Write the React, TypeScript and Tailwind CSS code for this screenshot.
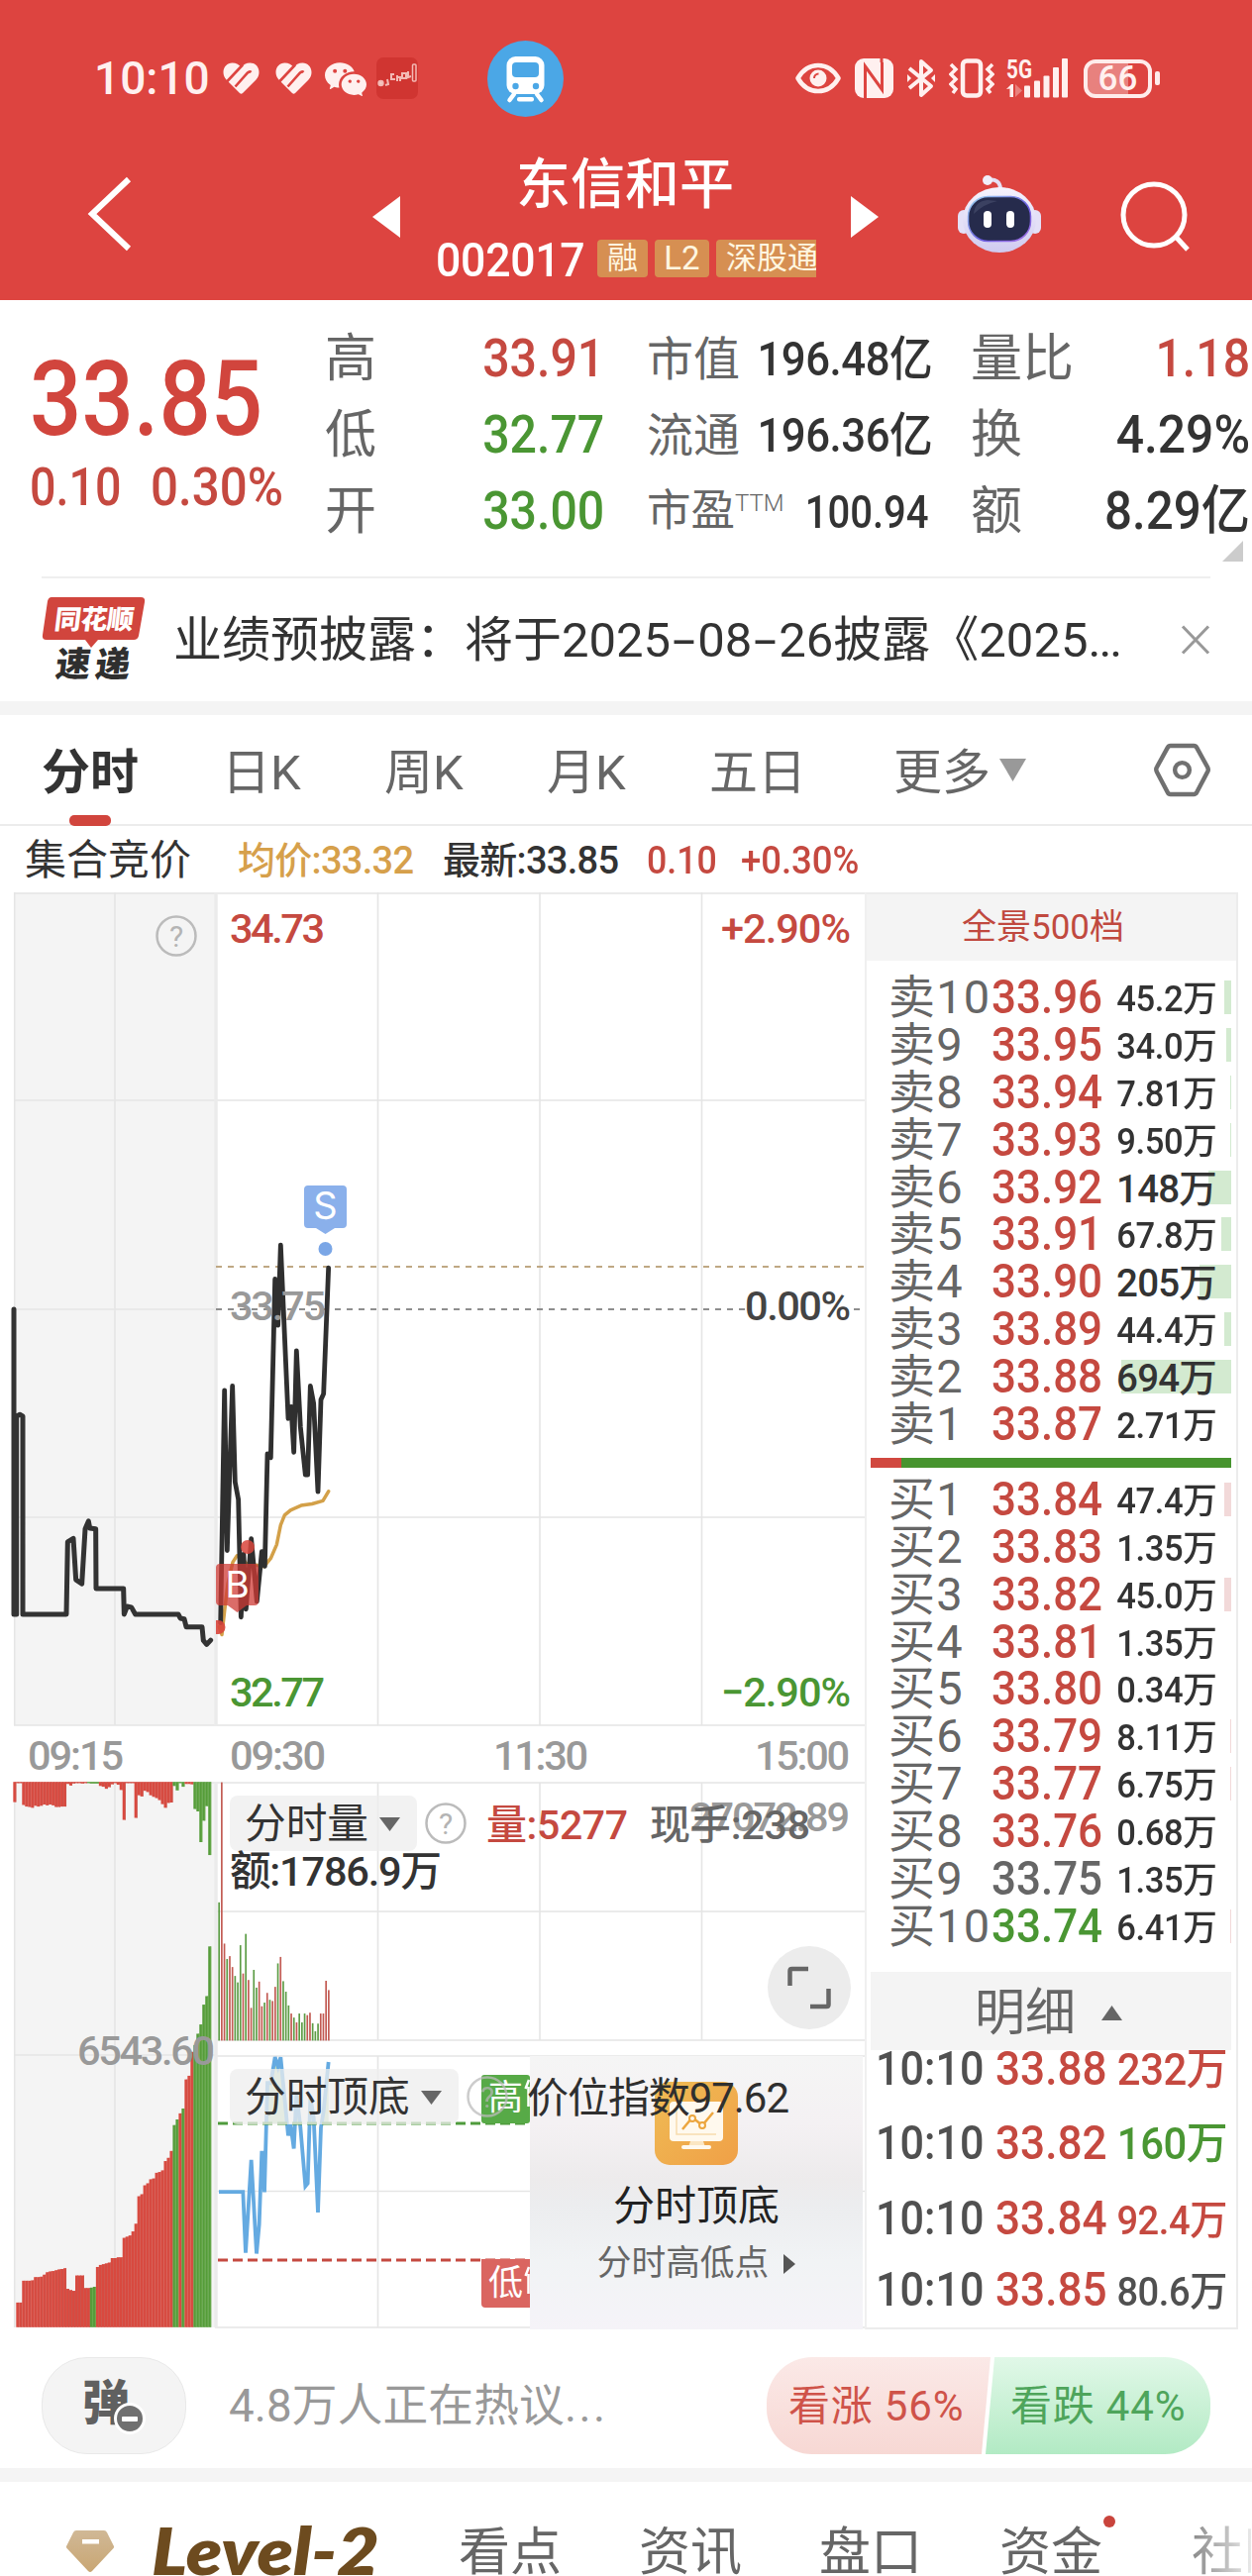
import React from "react";
import { BsWechat } from "react-icons/bs";

const RED = "#d1453d";
const GREEN = "#4a9633";

/* ---------- status bar icons ---------- */

function HeartIcon() {
  return (
    <svg width="37" height="32" viewBox="0 0 37 32">
      <path d="M9.500.5c4 0 7 2 9 4.500 2-2.500 5-4.500 9-4.500 5 0 9 4 9 9.500 0 3-1 5-3 7.500L20 31q-1.500 1.500-3 0L3.500 17.500C1.500 15 .5 13 .5 10 .5 4.500 4.500.5 9.500.5z" fill="#fff0ef" />
      <path d="M3.500 20 20 2.500M12.500 24.500 25 10.500q2-2 3.500-.5" fill="none" stroke="#dd4440" strokeWidth="2.600" />
    </svg>
  );
}

function AppIcon() {
  return (
    <svg width="42" height="42" viewBox="0 0 42 42">
      <rect width="42" height="42" rx="7" fill="#d03531" />
      <g fill="none" stroke="#f3b9b4" strokeWidth="2">
        <circle cx="4.500" cy="26" r="2.200" fill="#f3c9c4" />
        <path d="M9 28l3-1-1-5M14 17h4M15 17v5h4M21 18v6M20 20h4v4M26 16h4v5h-4zM32 14v6l3-1" />
        <rect x="36.500" y="7" width="3.500" height="17" rx="1" strokeWidth="1.500" />
      </g>
    </svg>
  );
}

function TrainBadge() {
  return (
    <svg width="77" height="77" viewBox="0 0 77 77">
      <circle cx="38.500" cy="38.500" r="38.500" fill="#4ba7e6" />
      <rect x="19.500" y="16" width="38" height="38" rx="9" fill="#fff" />
      <rect x="25" y="22" width="27" height="15" rx="4" fill="#4ba7e6" />
      <circle cx="28.500" cy="46" r="3.200" fill="#4ba7e6" />
      <circle cx="49" cy="46" r="3.200" fill="#4ba7e6" />
      <path d="M27 54l-4.500 6M50 54l4.500 6" stroke="#fff" strokeWidth="4.500" strokeLinecap="round" />
      <rect x="30" y="57" width="17" height="4.500" rx="2" fill="#fff" />
    </svg>
  );
}

function StatusBar() {
  return (
    <div className="flex h-[158px] items-center text-[#fff0ef]">
      <span className="ml-[95px] w-[117px] text-[46px] leading-none whitespace-nowrap font-medium">10:10</span>
      <span className="ml-[13px]"><HeartIcon /></span>
      <span className="ml-[16px]"><HeartIcon /></span>
      <BsWechat className="ml-[13px] h-[42px] w-[42px]" />
      <span className="ml-[10px]"><AppIcon /></span>
      <span className="ml-[70px]"><TrainBadge /></span>
      <svg className="ml-[234px]" width="46" height="32" viewBox="0 0 46 32" fill="none">
        <path d="M2.500 16C8 6.500 15 3 23 3s15 3.500 20.500 13C38 25.500 31 29 23 29S8 25.500 2.500 16z" stroke="#fff0ef" strokeWidth="4.500" strokeLinejoin="round" />
        <circle cx="23" cy="16" r="8.500" fill="#fff0ef" />
        <path d="M19 16a4.500 4.500 0 0 1 4.500-4.500" stroke="#dd4440" strokeWidth="2" />
      </svg>
      <svg className="ml-[14px]" width="39" height="40" viewBox="0 0 39 40">
        <rect width="39" height="40" rx="9" fill="#fff0ef" />
        <path d="M10.500 40V8L27.500 31.500V14M27 0v4" fill="none" stroke="#dd4440" strokeWidth="3" />
        <path d="M27.500 4V32" fill="none" stroke="#dd4440" strokeWidth="3" />
      </svg>
      <svg className="ml-[13px]" width="30" height="40" viewBox="0 0 30 40" fill="none" stroke="#fff0ef">
        <path d="M3 10 25 28 15 37V3l10 9L3 30" strokeWidth="4" strokeLinejoin="round" />
        <path d="M1 16v8l4-4zM29 16v8l-4-4z" fill="#fff0ef" stroke="none" />
      </svg>
      <svg className="ml-[13px]" width="46" height="40" viewBox="0 0 46 40" fill="none" stroke="#fff0ef">
        <rect x="14" y="2.500" width="18" height="35" rx="4" strokeWidth="4.500" />
        <path d="M2 6l5 5-5 5 5 5-5 5 5 5-3 4M44 6l-5 5 5 5-5 5 5 5-5 5 3 4" strokeWidth="3.500" />
      </svg>
      <svg className="ml-[12px]" width="62" height="40" viewBox="0 0 62 40" fill="#fff0ef">
        <text x="0" y="19.500" fontFamily="Roboto" fontWeight="700" fontSize="26" textLength="26" lengthAdjust="spacingAndGlyphs">5G</text>
        <path d="M0 31l5-5h2v13H3.500V30.500z" />
        <path d="M9 26v13l7-6.500z" opacity=".35" />
        <rect x="18" y="27.500" width="6" height="12" rx="1" />
        <rect x="28" y="22.500" width="6" height="17" rx="1" />
        <rect x="37.500" y="17.500" width="6" height="22" rx="1" />
        <rect x="47" y="9" width="6" height="30.500" rx="1" />
        <rect x="56" y="0" width="6" height="39.500" rx="1" />
      </svg>
      <div className="ml-[16px] flex items-center">
        <div className="flex h-[39px] w-[69px] items-center justify-center rounded-[12px] border-4 border-[#ffeceb] bg-linear-to-r from-[#e8817e] from-68% to-transparent to-68% text-[35px] leading-none font-medium">
          66
        </div>
        <div className="ml-[3px] h-[14px] w-[5px] rounded-[2px] bg-[#ffeceb]" />
      </div>
    </div>
  );
}

function Robot() {
  return (
    <svg width="86" height="80" viewBox="0 0 86 80">
      <defs>
        <linearGradient id="shell" x1="0" y1="0" x2="0" y2="1">
          <stop offset="0" stopColor="#f6f3fd" />
          <stop offset="1" stopColor="#cfcaf0" />
        </linearGradient>
        <linearGradient id="rim" x1="0" y1="0" x2="1" y2="1">
          <stop offset="0" stopColor="#9fd8f2" />
          <stop offset=".6" stopColor="#6a5be0" />
          <stop offset="1" stopColor="#a873e6" />
        </linearGradient>
      </defs>
      <path d="M31 6c8-2 13 2 13 9" fill="none" stroke="#e6e0f5" strokeWidth="4" />
      <circle cx="31" cy="6" r="5" fill="#f1eefa" />
      <rect x="1" y="36" width="12" height="24" rx="6" fill="#e4e0f7" />
      <rect x="73" y="36" width="12" height="24" rx="6" fill="#e4e0f7" />
      <ellipse cx="43" cy="46" rx="37" ry="33" fill="url(#shell)" />
      <rect x="11.500" y="22.500" width="63" height="45" rx="20" fill="#262b4c" stroke="url(#rim)" strokeWidth="1.500" />
      <path d="M17 40q1-13 14-14l10 1q-14 3-24 13z" fill="#4a5070" opacity=".6" />
      <rect x="27" y="37" width="8" height="17" rx="4" fill="#fff" />
      <rect x="50" y="37" width="8" height="17" rx="4" fill="#fff" />
    </svg>
  );
}

function NavBar() {
  return (
    <div className="flex h-[145px] items-start overflow-hidden">
      <svg className="mt-[19px] ml-[86px]" width="48" height="78" viewBox="0 0 48 78" fill="none" stroke="#fff" strokeWidth="6">
        <path d="M44 4 7 39l37 35" />
      </svg>
      <svg className="mt-[40px] ml-[242px]" width="28" height="42" viewBox="0 0 28 42"><path d="M28 0v42L0 21z" fill="#fff" /></svg>
      <div className="flex w-[455px] flex-col items-center">
        <h1 className="mr-[1px] text-[55px] leading-[56px] font-medium text-white">东信和平</h1>
        <div className="mt-[19px] flex h-[56px] w-[385px] items-center overflow-hidden">
          <span className="ml-[1px] w-[163px] origin-left scale-x-[.91] pt-[2px] text-[49px] leading-none font-medium tracking-[-0.3px] text-white">002017</span>
          <span className="h-[38px] w-[51px] shrink-0 rounded-[4px] bg-[#d68f52] text-center text-[31px] leading-[38px] text-[#fff6e0]">融</span>
          <span className="ml-[7px] h-[38px] w-[55px] shrink-0 rounded-[4px] bg-[#d68f52] text-center text-[33px] leading-[38px] text-[#fff6e0]">L2</span>
          <span className="ml-[7px] h-[38px] w-[101px] shrink-0 overflow-hidden rounded-l-[4px] bg-[#d68f52] pl-[10px] text-[31px] leading-[38px] whitespace-nowrap text-[#fff6e0]">深股通</span>
        </div>
      </div>
      <svg className="mt-[40px]" width="28" height="42" viewBox="0 0 28 42"><path d="M0 0v42l28-21z" fill="#fff" /></svg>
      <div className="mt-[18px] ml-[79px]"><Robot /></div>
      <svg className="mt-[24px] ml-[78px]" width="74" height="74" viewBox="0 0 74 74" fill="none" stroke="#fff" strokeWidth="5">
        <circle cx="35" cy="35" r="31" />
        <path d="M57 57l12 13" />
      </svg>
    </div>
  );
}

/* ---------- quote summary ---------- */

function Quote() {
  return (
    <div className="flex h-[279px] overflow-hidden font-medium whitespace-nowrap">
      <div className="ml-[30px] w-[298px] shrink-0 text-[#d1453d]">
        <div className="mt-[47px] w-[270px] origin-left scale-x-[.87] text-[106px] leading-[106px]">33.85</div>
        <div className="mt-[10px] flex text-[53px] leading-[53px] text-[#c54940]">
          <span className="w-[122px] origin-left scale-x-[.88]">0.10</span>
          <span className="origin-left scale-x-[.93]">0.30%</span>
        </div>
      </div>
      <div className="mt-[21px] w-[282px] shrink-0">
        {[
          ["高", "33.91", "text-[#c54940]"],
          ["低", "32.77", "text-[#4a9633]"],
          ["开", "33.00", "text-[#4a9633]"],
        ].map(([k, v, c]) => (
          <div key={k} className="flex h-[77px] items-center justify-between">
            <span className="text-[52px] leading-none font-normal text-[#666]">{k}</span>
            <span className={`origin-right scale-x-[.91] text-[53px] leading-none ${c}`}>{v}</span>
          </div>
        ))}
      </div>
      <div className="mt-[21px] ml-[43px] w-[285px] shrink-0 text-[#333]">
        {[
          ["市值", "196.48亿"],
          ["流通", "196.36亿"],
        ].map(([k, v]) => (
          <div key={k} className="flex h-[77px] items-center justify-between">
            <span className="text-[47px] leading-none font-normal text-[#666]">{k}</span>
            <span className="origin-right scale-x-[.91] text-[48px] leading-none tracking-[-0.500px]">{v}</span>
          </div>
        ))}
        <div className="flex h-[77px] items-center">
          <span className="text-[44.500px] leading-none font-normal text-[#666]">市盈</span>
          <span className="mb-[17px] text-[24px] leading-none font-light text-[#666]">TTM</span>
          <span className="ml-auto origin-right scale-x-[.87] text-[46px] leading-none">100.94</span>
        </div>
      </div>
      <div className="mt-[21px] ml-[42px] w-[282px] shrink-0 text-[#333]">
        {[
          ["量比", "1.18", "text-[#c54940] scale-x-[.91]"],
          ["换", "4.29%", "scale-x-[.94]"],
          ["额", "8.29亿", "scale-x-[.93]"],
        ].map(([k, v, c]) => (
          <div key={k} className="flex h-[77px] items-center justify-between">
            <span className="text-[52px] leading-none font-normal text-[#666]">{k}</span>
            <span className={`origin-right text-[53px] leading-none ${c}`}>{v}</span>
          </div>
        ))}
        <svg className="mt-[-9px] ml-[254px]" width="21" height="21"><path d="M21 0v21H0z" fill="#ccc" /></svg>
      </div>
    </div>
  );
}

function News() {
  return (
    <div className="mx-[42px] flex h-[126px] items-start border-t-2 border-[#efefef]">
      <svg className="mt-[18px]" width="106" height="88" viewBox="0 0 106 88">
        <path d="M10 1h90q5 0 4 5l-6 34q-1 4-5 4H57l-7 8-6-8H5q-5 0-4-5L6 5q1-4 4-4z" fill={RED} />
        <g transform="skewX(-7)" fontFamily='Roboto, "Noto Sans CJK SC", sans-serif' fontWeight="900">
          <text x="16" y="33" fontSize="27" fill="#fff" textLength="80">同花顺</text>
          <text x="23" y="81" fontSize="35" fill="#2f2f2f" textLength="75">速递</text>
        </g>
      </svg>
      <p className="mt-[33px] ml-[27px] w-[960px] text-[49px] leading-[60px] whitespace-nowrap text-[#333]">
        业绩预披露：将于2025<span className="inline-block w-[27px] scale-x-[1.7] text-center">-</span>08
        <span className="inline-block w-[27px] scale-x-[1.7] text-center">-</span>26披露《2025<span className="tracking-[-2px]">...</span>
      </p>
      <svg className="mt-[47px] ml-[58px]" width="30" height="30" viewBox="0 0 30 30" stroke="#999" strokeWidth="3">
        <path d="M2 1.500 28 28.500M28 1.500 2 28.500" />
      </svg>
    </div>
  );
}

function PeriodTabs() {
  return (
    <div className="flex h-[112px] items-start border-b-2 border-[#ececec] text-[49px] leading-[60px] whitespace-nowrap text-[#666]">
      <div className="ml-[42px] flex w-[98px] flex-col items-center pt-[29px]">
        <span className="font-bold text-[#333]">分时</span>
        <span className="mt-[12px] h-[11px] w-[42px] rounded-[5px] bg-[#d1453d]" />
      </div>
      <span className="mt-[29px] ml-[84px] w-[80px]">日K</span>
      <span className="mt-[29px] ml-[84px] w-[80px]">周K</span>
      <span className="mt-[29px] ml-[84px] w-[80px]">月K</span>
      <span className="mt-[29px] ml-[84px] w-[98px]">五日</span>
      <span className="mt-[29px] ml-[88px] w-[98px]">更多</span>
      <svg className="mt-[44px] ml-[9px]" width="27" height="23"><path d="M0 0h27L13.500 23z" fill="#999" /></svg>
      <svg className="mt-[28px] ml-[129px]" width="57" height="55" viewBox="0 0 58 56" fill="none" stroke="#707070" strokeWidth="4.500">
        <path d="M17 3h24q2 0 3 2l11 20q1.500 3 0 5L44 51q-1 2-3 2H17q-2 0-3-2L3 30q-1.500-3 0-5L14 5q1-2 3-2z" />
        <circle cx="29" cy="28" r="7.500" />
      </svg>
    </div>
  );
}

function InfoRow() {
  return (
    <div className="flex h-[67px] items-center pt-[3px] text-[38px] leading-none whitespace-nowrap font-medium">
      <span className="ml-[25px] w-[215px] text-[42px] font-normal text-[#333]">集合竞价</span>
      <span className="w-[207px] tracking-[-0.7px] text-[#d6a04b]">均价:33.32</span>
      <span className="w-[206px] tracking-[-0.700px] text-[#333]">最新:33.85</span>
      <span className="w-[95px] origin-left scale-x-[.94]  text-[#c54940]">0.10</span>
      <span className="origin-left scale-x-[.96] text-[#c54940]">+0.30%</span>
    </div>
  );
}

/* ---------- charts ---------- */

type LabelProps = {
  x: number;
  y: number;
  w: number;
  fill?: string;
  size?: number;
  weight?: number;
  children: string;
};

function Label({ x, y, w, fill = "#999", size = 41.5, weight = 500, children }: LabelProps) {
  return (
    <text x={x} y={y} textLength={w} fill={fill} fontSize={size} fontWeight={weight} fontFamily='Roboto, "Noto Sans CJK SC", sans-serif'>
      {children}
    </text>
  );
}

const auctionPath =
  "M42 359V1138H50V632L60 628L69 632V1138H201L205 953L222 944L230 1050L248 1060L258 920L268 900L272 918L290 920L291 1072H374L376 1138L385 1118L398 1120L410 1138H540L546 1148L558 1150L564 1170H612L616 1205L626 1215L638 1204";
const pricePath =
  "M668 1160L680 566L688 975L704 555L712 800L722 845L730 1145L738 985L745 1125L761 945L778 1105L793 978L802 1015L810 728L820 738L833 282L842 400L850 195L873 638L882 608L890 724L898 465L910 660L925 782L932 782L940 555L950 600L963 825L972 590L980 575L995 253";
const averagePath =
  "M664 1170L672 1190L680 1130L690 1060L705 1005L718 988L730 990L745 1008L800 1016L820 995L838 960L850 910L862 885L880 872L912 860L945 856L978 848L995 824";
const indexPath =
  "M663 1159H736L744 1310L761 1080L777 1312L785 1240L793 1058L801 1160L810 890L820 890L833 826L842 850L850 826L873 1020L880 992L890 1052L898 915L910 1000L925 1145L932 1138L940 925L950 975L963 1210L972 1000L980 960L995 838";

const hanging = [
  195, 148, 148, 202, 206, 207, 209, 204, 206, 204, 201, 203, 201, 203, 207, 207, 206, 206, 150, 154, 149, 148, 148, 149, 148,
  148, 149, 149, 149, 155, 157, 162, 158, 151, 148, 152, 165, 239, 148, 148, 148, 234, 178, 181, 167, 170, 178, 182, 185, 190,
  200, 209, 197, 196, 155, 166, 148, 157, 150, 150, 151, 212, 218, 294, 241, 205, 326,
];
const rising = [
  1494, 1433, 1433, 1379, 1379, 1379, 1378, 1370, 1370, 1369, 1364, 1358, 1356, 1355, 1353, 1351, 1350, 1348, 1399, 1402, 1404,
  1366, 1366, 1366, 1397, 1397, 1396, 1394, 1345, 1340, 1338, 1336, 1334, 1323, 1323, 1321, 1321, 1273, 1270, 1267, 1257, 1238,
  1170, 1165, 1143, 1138, 1128, 1126, 1112, 1110, 1106, 1083, 1075, 1058, 994, 980, 965, 953, 881, 872, 813, 796, 768, 745, 696,
  675, 552,
];
const hangingGreen = (i: number) => (i >= 25 && i <= 28) || (i >= 54 && i <= 57) || i >= 61;
const risingGreen = (i: number) => i === 26 || i === 27 || i === 54 || i === 55 || i === 57 || i >= 61;

const volume: [string, number][] = [
  ["g", 443], ["r", 146], ["r", 545], ["g", 583], ["r", 576], ["r", 603], ["g", 625], ["g", 641], ["g", 549], ["r", 619],
  ["g", 521], ["r", 635], ["r", 704], ["g", 610], ["g", 654], ["r", 639], ["r", 700], ["g", 691], ["r", 667], ["g", 684],
  ["r", 687], ["r", 652], ["g", 594], ["r", 578], ["g", 638], ["g", 664], ["g", 698], ["r", 718], ["g", 728], ["r", 740],
  ["g", 718], ["g", 740], ["g", 718], ["r", 722], ["r", 716], ["g", 742], ["g", 762], ["g", 743], ["r", 718], ["r", 718],
  ["r", 637], ["r", 660],
];

function Help({ cx, cy }: { cx: number; cy: number }) {
  return (
    <g>
      <circle cx={cx} cy={cy} r="19.500" fill="none" stroke="#bbb" strokeWidth="2.500" />
      <text x={cx} y={cy + 10.5} textAnchor="middle" fontSize="30" fill="#b4b4b4" fontFamily="Roboto">?</text>
    </g>
  );
}

function Chip({ text, className }: { text: string; className: string }) {
  return (
    <div className={`absolute left-[232px] flex h-[56px] items-center rounded-[8px] bg-[#eeeeee]/75 pt-[2px] pl-[15px] text-[41.700px] leading-none text-[#333] ${className}`}>
      {text}
      <svg className="ml-[11px]" width="21" height="14"><path d="M0 0h21L10.500 14z" fill="#666" /></svg>
    </div>
  );
}

function Charts() {
  return (
    <div className="relative h-[1451px] w-[873px] shrink-0">
      <svg width="873" height="1451" viewBox="0 901 873 1451" className="block">
        <rect x="14" y="901" width="203" height="841" fill="#f4f4f4" />
        <rect x="14" y="1800" width="203" height="550" fill="#f4f4f4" />
        <g stroke="#e5e5e5" strokeWidth="1.600">
          <path d="M14 902H873M14 1111H873M14 1322H217M14 1532H873M14 1742H873M14.700 901V1742M116 901V1742M381.500 901V1742M545 901V1742M708.500 901V1742" />
          <path d="M14 1800H873M217 1930H873M217 2060H873M14 2075H217M217 2076H873M217 2212.500H873M217 2350H873M14.700 1800V2350M116 1800V2350M381.500 1800V2060M381.500 2076V2350M545 1800V2060M708.500 1800V2060" />
        </g>
        <path d="M218 901V1742M218 1800V2350" stroke="#ebebeb" strokeWidth="3.500" />

        <path d="M218 1279H873" stroke="#bfa884" strokeWidth="2" strokeDasharray="6 6" />
        <path d="M218 1322H752M862 1322H873" stroke="#8e8e8e" strokeWidth="2" strokeDasharray="6 6" />

        <Label x={232} y={952} w={96} fill="#c54940">34.73</Label>
        <Label x={728} y={952} w={131} fill="#c54940">+2.90%</Label>
        <Label x={752} y={1333} w={107} fill="#444">0.00%</Label>
        <Label x={232} y={1722.5} w={96} fill={GREEN}>32.77</Label>
        <Label x={728} y={1722.5} w={131} fill={GREEN}>−2.90%</Label>
        <Label x={28} y={1787} w={97}>09:15</Label>
        <Label x={232} y={1787} w={97}>09:30</Label>
        <Label x={498} y={1787} w={96}>11:30</Label>
        <Label x={762} y={1787} w={96}>15:00</Label>
        <Help cx={178} cy={945} />

        <g transform="translate(0 1180) scale(.33333 .39541)" fill="none" strokeLinejoin="round" strokeLinecap="round">
          <path d={auctionPath} stroke="#333" strokeWidth="5" vectorEffect="non-scaling-stroke" />
          <path d={averagePath} stroke="#d3a048" strokeWidth="3.500" vectorEffect="non-scaling-stroke" />
          <path d={pricePath} stroke="#2f2f2f" strokeWidth="4.800" vectorEffect="non-scaling-stroke" />
        </g>
        <Label x={232} y={1332.5} w={97}>33.75</Label>

        <path d="M311 1197h35q4 0 4 4v35q0 4-4 4h-8l-9.500 6-9.500-6h-8q-4 0-4-4v-35q0-4 4-4z" fill="#8ab0eb" />
        <text x="328.500" y="1231" textAnchor="middle" fontSize="38" fill="#fff" fontFamily="Inter, Roboto">S</text>
        <circle cx="328.500" cy="1261" r="7" fill="#7aa6e6" />
        <path d="M222 1579h35q4 0 4 4v34q0 4-4 4h-8l-9.500 7-9.500-7h-8q-4 0-4-4v-34q0-4 4-4z" fill="#cf3b35" fillOpacity=".75" />
        <text x="239.500" y="1613" textAnchor="middle" fontSize="37" fill="#fff" fontFamily="Inter, Roboto">B</text>
        <circle cx="250" cy="1562" r="7" fill="#d8453c" fillOpacity=".85" />
        <path d="M218 1636h2.500a7 7 0 0 1 0 14H218z" fill="#d8453c" fillOpacity=".9" />

        <g transform="translate(0 1740) scale(.33333 .40816)">
          {hanging.map((b, i) => (
            <g key={i} fill={hangingGreen(i) ? "#559c3a" : "#d9493f"}>
              <rect x={40 + i * 8.95} y={145} width={8.95} height={b - 145} />
              <rect x={40 + i * 8.95 + 6.6} y={145} width={2.3} height={b - 145} fill={hangingGreen(i) ? "#6fae52" : "#c8564e"} />
            </g>
          ))}
          {rising.map((t, i) => (
            <g key={i} fill={risingGreen(i) ? "#559c3a" : "#d9493f"}>
              <rect x={40 + i * 8.95} y={t} width={8.95} height={1494 - t} />
              <rect x={40 + i * 8.95 + 6.6} y={t} width={2.3} height={1494 - t} fill={risingGreen(i) ? "#6fae52" : "#c8564e"} />
            </g>
          ))}
          {volume.map(([c, t], i) => (
            <rect key={i} x={661 + i * 8.1} y={t} width={5} height={785 - t} fill={c === "g" ? "#5c9c45" : "#c25a52"} />
          ))}
          <path d="M804 990L810 890L820 890L833 826L842 850L850 826L870 990zM973 990L980 960L995 838V990zM894 990L898 915L908 990zM936 990L940 925L952 990z" fill="#c5e2be" />
          <path d={indexPath} fill="none" stroke="#64aae1" strokeWidth="3.800" vectorEffect="non-scaling-stroke" />
        </g>
        <Label x={78} y={2085} w={139}>6543.60</Label>

        <path d="M220 2144H535" stroke="#4f9b3d" strokeWidth="3" strokeDasharray="10 5" />
        <path d="M220 2282H535" stroke="#c54940" strokeWidth="3" strokeDasharray="10 5" />

        <Help cx={450} cy={1841} />
        <Label x={491} y={1857} w={143} fill="#c54940" size={41}>量:5277</Label>
        <Label x={696} y={1849} w={162}>27072.89</Label>
        <Label x={656} y={1857} w={162} fill="#666" size={41}>现手:238</Label>

        <rect x="486" y="2095" width="49" height="49" rx="3" fill="#57aa47" />
        <path d="M486 2281h49v49h-45q-4 0-4-4z" fill="#da6560" />
        <Label x={493} y={2130} w={35} size={35} weight={400} fill="#fff">高</Label>
        <Label x={493} y={2317} w={35} size={35} weight={400} fill="#fff">低</Label>
        <path d="M534 2100l-3.500 9M533.500 2107v20M534 2289l-3.500 9M533.500 2296v20" stroke="#fff" strokeWidth="2.500" />
        <g opacity=".75"><Help cx={492} cy={2117} /></g>
      </svg>

      <Chip text="分时量" className="top-[912px] w-[189px]" />
      <Chip text="分时顶底" className="top-[1188px] w-[231px]" />

      <div className="absolute top-[1064px] left-[775px] flex h-[84px] w-[84px] items-center justify-center rounded-full bg-[#ececec]">
        <svg width="44" height="44" viewBox="0 0 44 44" fill="none" stroke="#666" strokeWidth="4.500">
          <path d="M2.500 20V5q0-2 2-2H21M41.500 23v16q0 2-2 2H23" />
        </svg>
      </div>

      <div className="absolute top-[1175px] left-[535px] flex h-[276px] w-[336px] flex-col items-center bg-[linear-gradient(180deg,#f5f5f5_0%,#f4f1f3_25%,#edebec_45%,#ecedef_55%,#f1f3f5_75%,#f5f3f8_100%)]">
        <svg className="mt-[26px]" width="84" height="84" viewBox="0 0 84 84">
          <defs>
            <linearGradient id="promo" x1="0" y1="0" x2="1" y2="1">
              <stop offset="0" stopColor="#efbc55" />
              <stop offset="1" stopColor="#f0a047" />
            </linearGradient>
          </defs>
          <rect width="84" height="84" rx="15" fill="url(#promo)" />
          <rect x="15" y="20" width="54" height="40" rx="4" fill="#fff9ee" />
          <path d="M36 60h13l2 6H34z" fill="#fbe6c2" />
          <rect x="27" y="64" width="30" height="4" rx="2" fill="#fff9ee" />
          <path d="M22 26v27h40" fill="none" stroke="#f7dcae" strokeWidth="1.500" />
          <path d="M28 48l10-12 10 8 11-13" fill="none" stroke="#eca63f" strokeWidth="2.500" />
          <circle cx="38" cy="37" r="3" fill="#fff9ee" stroke="#eca63f" strokeWidth="2" />
          <circle cx="48" cy="44" r="3" fill="#fff9ee" stroke="#eca63f" strokeWidth="2" />
        </svg>
        <span className="mt-[21px] text-[42px] leading-[42px] text-[#222]">分时顶底</span>
        <span className="mt-[19px] flex items-center text-[34.700px] leading-[35px] text-[#666]">
          分时高低点
          <svg className="ml-[15px]" width="12" height="20"><path d="M0 0 12 10 0 20z" fill="#555" /></svg>
        </span>
      </div>

      <svg className="absolute top-0 left-0" width="873" height="1451" viewBox="0 901 873 1451">
        <Label x={532} y={2133} w={265} size={42} weight={400} fill="#2f2f2f">价位指数97.62</Label>
        <Label x={232} y={1904} w={214} size={41.5} fill="#333">额:1786.9万</Label>
      </svg>
    </div>
  );
}

/* ---------- order book ---------- */

type Row = [string, string, string, string];

const asks: Row[] = [
  ["卖10", "33.96", "45.2万", "w-[7px]"],
  ["卖9", "33.95", "34.0万", "w-[5px]"],
  ["卖8", "33.94", "7.81万", "w-px"],
  ["卖7", "33.93", "9.50万", "w-px"],
  ["卖6", "33.92", "148万", "w-[23px]"],
  ["卖5", "33.91", "67.8万", "w-[10px]"],
  ["卖4", "33.90", "205万", "w-[32px]"],
  ["卖3", "33.89", "44.4万", "w-[7px]"],
  ["卖2", "33.88", "694万", "w-[111px]"],
  ["卖1", "33.87", "2.71万", "w-0"],
];
const bids: Row[] = [
  ["买1", "33.84", "47.4万", "w-[7px]"],
  ["买2", "33.83", "1.35万", "w-0"],
  ["买3", "33.82", "45.0万", "w-[7px]"],
  ["买4", "33.81", "1.35万", "w-0"],
  ["买5", "33.80", "0.34万", "w-0"],
  ["买6", "33.79", "8.11万", "w-px"],
  ["买7", "33.77", "6.75万", "w-px"],
  ["买8", "33.76", "0.68万", "w-0"],
  ["买9", "33.75", "1.35万", "w-0"],
  ["买10", "33.74", "6.41万", "w-px"],
];

function BookRow({ row, bar }: { row: Row; bar: string }) {
  const [label, price, vol, width] = row;
  const color = price === "33.75" ? "text-[#666]" : price === "33.74" ? "text-[#4a9633]" : "text-[#c54940]";
  return (
    <div className="relative flex h-[47.900px] items-baseline pl-[22px] leading-[52px] whitespace-nowrap">
      <span className={`absolute top-[9px] right-[5px] h-[34px] ${bar} ${width}`} />
      <span className="relative w-[104px] text-[47px] tracking-[1.200px] text-[#666]">{label}</span>
      <span className={`relative origin-left scale-x-[.915] text-[48px] font-medium ${color}`}>{price}</span>
      <span
        className={`absolute top-0 right-[20px] origin-right leading-[56px] font-medium text-[#333] ${
          vol.includes(".") ? "scale-x-[.96] text-[36px] tracking-[-0.400px]" : "text-[38.500px] tracking-[-0.800px]"
        }`}
      >
        {vol}
      </span>
    </div>
  );
}

function OrderBook() {
  return (
    <div className="h-[1451px] w-[377px] border-2 border-[#ececec] border-l-[#f0f0f0]">
      <div className="h-[67px] bg-[#f4f4f4] pr-[17px] text-center text-[35px] leading-[67px] text-[#c0493f]">全景500档</div>
      <div className="mt-[11px]">
        {asks.map((r) => <BookRow key={r[0]} row={r} bar="bg-[#d3ead0]" />)}
      </div>
      <div className="mt-[12px] mr-[5px] ml-[4px] flex h-[10px]">
        <div className="w-[31px] bg-[#d1483f]" />
        <div className="flex-1 bg-[#47942f]" />
      </div>
      <div className="mt-[6px]">
        {bids.map((r) => <BookRow key={r[0]} row={r} bar="bg-[#f2d9d9]" />)}
      </div>
      <div className="mt-[24px] mr-[5px] ml-[4px] flex h-[79px] items-center bg-[#f4f4f4] pt-[4px] pl-[105px] text-[51px] leading-none text-[#666]">
        明细
        <svg className="ml-[26px]" width="21" height="15"><path d="M10.500 0 21 15H0z" fill="#666" /></svg>
      </div>
      <div className="mx-[9px] font-medium whitespace-nowrap">
        {[
          ["33.88", "232万", "text-[#c54940]"],
          ["33.82", "160万", "text-[#4a9633]"],
          ["33.84", "92.4万", "text-[#c54940]"],
          ["33.85", "80.6万", "text-[#505050]"],
        ].map(([p, v, c], i) => (
          <div key={p} className={`flex items-baseline leading-[38px] ${i === 2 ? "h-[72.500px]" : "h-[75.500px]"}`}>
            <span className="w-[121px] origin-left scale-x-[.88] text-[49px] text-[#505050]">10:10</span>
            <span className="w-[110px] origin-left scale-x-[.9] text-[49px] text-[#c54940]">{p}</span>
            <span
              className={`ml-auto origin-right ${
                v.includes(".") ? "scale-x-[.93] text-[41px] tracking-[-0.500px]" : "scale-x-[.95] text-[44px] tracking-[-0.500px]"
              } ${c}`}
            >
              {v}
            </span>
          </div>
        ))}
      </div>
    </div>
  );
}

/* ---------- footer ---------- */

function Discussion() {
  return (
    <div className="flex h-[140px] items-start pt-[28px]">
      <div className="relative ml-[42px] h-[98px] w-[146px] rounded-[46px] border border-[#e9e9e9] bg-[#f4f4f4] pl-[40px] text-[48px] leading-[92px] font-black text-[#606060]">
        弹
        <svg className="absolute top-[44px] left-[71px]" width="34" height="34" viewBox="0 0 34 34">
          <circle cx="17" cy="17" r="14.500" fill="#707070" stroke="#fff" strokeWidth="3" />
          <rect x="9" y="15" width="16" height="5" rx="1" fill="#fff" />
        </svg>
      </div>
      <span className="ml-[43px] w-[543px] text-[45.700px] leading-[100px] tracking-[.15px] text-[#999]">
        4.8万人正在热议<span className="tracking-[2.500px]">...</span>
      </span>
      <div className="flex h-[98px] text-[42px] leading-[100px] whitespace-nowrap">
        <div className="h-full w-[226px] rounded-l-[46px] bg-linear-to-b from-[#fbe9e7] to-[#f7d8d4] pl-[22px] tracking-[.8px] text-[#cf5349] [clip-path:polygon(0_0,100%_0,96%_100%,0_100%)]">
          看涨 56%
        </div>
        <div className="-ml-[5px] h-full w-[227px] rounded-r-[46px] bg-linear-to-b from-[#e1f8e8] to-[#b2eac4] pl-[25px] tracking-[.8px] text-[#4ea55b] [clip-path:polygon(4%_0,100%_0,100%_100%,0_100%)]">
          看跌 44%
        </div>
      </div>
    </div>
  );
}

function BottomTabs() {
  return (
    <div className="flex h-[95px] items-start overflow-hidden pt-[42px] text-[52px] leading-[60px] whitespace-nowrap text-[#666]">
      <svg className="mt-[7px] ml-[66px]" width="50" height="43" viewBox="0 0 50 43">
        <defs>
          <linearGradient id="gem" x1="0" y1="0" x2="0" y2="1">
            <stop offset="0" stopColor="#d0b896" />
            <stop offset="1" stopColor="#c9a673" />
          </linearGradient>
        </defs>
        <path d="M11 0h28q2 0 3 2l7 14q.5 1-.5 2L27 41q-2 2-4 0L1.500 18q-1-1-.5-2L8 2q1-2 3-2z" fill="url(#gem)" />
        <rect x="17" y="9" width="17" height="4.500" fill="#fff" />
      </svg>
      <svg className="ml-[34px]" width="240" height="53" viewBox="0 0 240 53">
        <text x="3" y="51.500" fontFamily='Lato, "Open Sans", sans-serif' fontStyle="italic" fontWeight="800" fontSize="67" fill="#6d4b1f" textLength="230" lengthAdjust="spacingAndGlyphs">Level-2</text>
      </svg>
      <span className="ml-[73px] w-[104px]">看点</span>
      <span className="ml-[78px] w-[104px]">资讯</span>
      <span className="ml-[78px] w-[104px]">盘口</span>
      <span className="relative ml-[78px] w-[104px]">
        资金
        <span className="absolute -top-[8px] left-[105px] h-[12px] w-[12px] rounded-full bg-[#c9443c]" />
      </span>
      <span className="ml-[90px] w-[60px] overflow-hidden bg-linear-to-r from-[#8a8a8a] to-[#e8e8e8] bg-clip-text text-transparent">社区</span>
    </div>
  );
}

export default function App() {
  return (
    <div className='h-[2601px] w-[1264px] overflow-hidden bg-white font-[Roboto,"Noto_Sans_CJK_SC",sans-serif] [&_svg]:shrink-0'>
      <header className="h-[303px] bg-[#dd4440]">
        <StatusBar />
        <NavBar />
      </header>
      <Quote />
      <News />
      <div className="h-[14px] bg-[#f4f4f4]" />
      <PeriodTabs />
      <InfoRow />
      <div className="flex">
        <Charts />
        <OrderBook />
      </div>
      <Discussion />
      <div className="h-[14px] bg-[#f4f4f4]" />
      <BottomTabs />
    </div>
  );
}
